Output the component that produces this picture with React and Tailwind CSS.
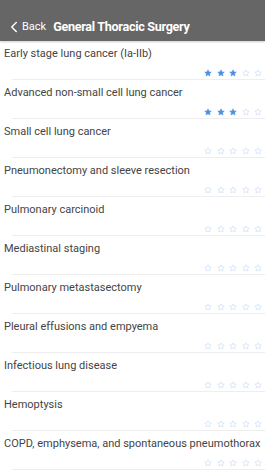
import { ChevronLeft } from "lucide-react";

const topics = [
  { name: "Early stage lung cancer (Ia-IIb)", rating: 3 },
  { name: "Advanced non-small cell lung cancer", rating: 3 },
  { name: "Small cell lung cancer", rating: 0 },
  { name: "Pneumonectomy and sleeve resection", rating: 0 },
  { name: "Pulmonary carcinoid", rating: 0 },
  { name: "Mediastinal staging", rating: 0 },
  { name: "Pulmonary metastasectomy", rating: 0 },
  { name: "Pleural effusions and empyema", rating: 0 },
  { name: "Infectious lung disease", rating: 0 },
  { name: "Hemoptysis", rating: 0 },
  { name: "COPD, emphysema, and spontaneous pneumothorax", rating: 0 },
];

const Star = ({ filled }) => (
  <svg width="8" height="8" viewBox="0 0 24 24">
    <path
      d="M12 2.5l2.9 6.3 6.9.7-5.2 4.6 1.5 6.8L12 17.4l-6.1 3.5 1.5-6.8-5.2-4.6 6.9-.7z"
      fill={filled ? "#4a8fe0" : "none"}
      stroke={filled ? "#4a8fe0" : "#bcd5f3"}
      strokeWidth="1.6"
      strokeLinejoin="round"
    />
  </svg>
);

const App = () => {
  return (
    <div className="w-[265px] h-[471px] overflow-hidden bg-white font-['Roboto',sans-serif]">
      <div className="h-[41px] bg-[#666666] flex items-end pb-[5px] shadow-[0_1px_2px_rgba(0,0,0,0.2)] relative z-10">
        <div className="flex items-center pl-[5px] text-white">
          <ChevronLeft size={18} strokeWidth={2} className="-mr-[1px]" />
          <span className="text-[11px]">Back</span>
        </div>
        <h1 className="ml-[7px] text-white font-bold text-[12.6px] leading-[18px] tracking-[-0.3px]">
          General Thoracic Surgery
        </h1>
      </div>
      <div className="flex flex-col">
        {topics.map((t) => (
          <div key={t.name} className="h-[39px] flex flex-col">
            <div className="pl-[4px] pt-[6px] text-[11px] leading-[14px] text-[#444444] whitespace-nowrap">
              {t.name}
            </div>
            <div className="flex justify-end gap-[4.5px] pr-[3px] mt-[8px]">
              {[0, 1, 2, 3, 4].map((i) => (
                <Star key={i} filled={i < t.rating} />
              ))}
            </div>
            <div className="mt-auto ml-[12px] h-px bg-[#eeeeee]" />
          </div>
        ))}
      </div>
    </div>
  );
};

export default App;
